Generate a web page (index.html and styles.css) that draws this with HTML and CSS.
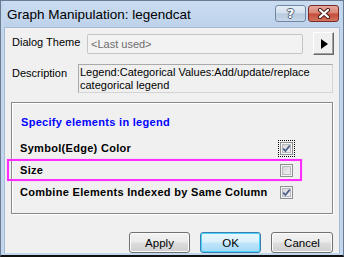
FILE: index.html
```html
<!DOCTYPE html>
<html lang="en">
<head>
  <meta charset="UTF-8" />
  <title>Graph Manipulation: legendcat</title>
  <link rel="stylesheet" href="styles.css">
</head>
<body>
  <div class="window">
    <div class="titlebar">
      <span class="title">Graph Manipulation: legendcat</span>
      <span class="cap-btn help">?</span>
      <span class="cap-btn close">
        <svg width="16" height="11" viewBox="0 0 16 11">
          <path d="M4 2 L12 9 M12 2 L4 9" stroke="#4a1d17" stroke-width="4.2" stroke-linecap="round" fill="none"/>
          <path d="M4 2 L12 9 M12 2 L4 9" stroke="#fff" stroke-width="2.2" stroke-linecap="round" fill="none"/>
        </svg>
      </span>
    </div>

    <div class="client">
      <div class="row theme-row">
        <label class="lbl theme-lbl">Dialog Theme</label>
        <div class="combo">&lt;Last used&gt;</div>
        <button class="arrow-btn"><span class="tri"></span></button>
      </div>

      <div class="row desc-row">
        <label class="lbl desc-lbl">Description</label>
        <div class="desc-box">Legend:Categorical Values:Add/update/replace<br>categorical legend</div>
      </div>

      <div class="group">
        <div class="group-head">Specify elements in legend</div>
        <div class="opt">
          <span class="opt-lbl">Symbol(Edge) Color</span>
          <span class="cb focus"><svg viewBox="0 0 11 11"><path d="M2.2 5.6 L4.4 8 L8.8 2.6" stroke="#4b5f8c" stroke-width="1.7" fill="none"/></svg></span>
        </div>
        <div class="opt marked">
          <span class="opt-lbl">Size</span>
          <span class="cb"></span>
        </div>
        <div class="opt">
          <span class="opt-lbl">Combine Elements Indexed by Same Column</span>
          <span class="cb"><svg viewBox="0 0 11 11"><path d="M2.2 5.6 L4.4 8 L8.8 2.6" stroke="#4b5f8c" stroke-width="1.7" fill="none"/></svg></span>
        </div>
      </div>

      <div class="buttons">
        <button class="btn">Apply</button>
        <button class="btn default">OK</button>
        <button class="btn wide">Cancel</button>
      </div>
    </div>
  </div>
</body>
</html>
```

FILE: styles.css
```css
html, body {
  margin: 0;
  padding: 0;
}
body {
  width: 344px;
  height: 257px;
  overflow: hidden;
  font-family: "Liberation Sans", Arial, sans-serif;
  font-size: 11px;
  color: #000;
}
.window {
  width: 344px;
  height: 257px;
  box-sizing: border-box;
  border: 1px solid #6b7c92;
  border-bottom: 2px solid #111;
  background: #c2d6ee;
  padding: 0 3px 2px 3px;
  display: flex;
  flex-direction: column;
}
.titlebar {
  height: 26px;
  display: flex;
  align-items: flex-start;
  padding: 0 1px 0 3px;
  background: linear-gradient(#cadcf0, #bdd2eb);
}
.title {
  flex: 1;
  font-size: 13.5px;
  line-height: 16px;
  padding-top: 6px;
  color: #000;
}
.cap-btn {
  margin-top: 4px;
  width: 31px;
  height: 17px;
  box-sizing: border-box;
  border-radius: 3px;
  display: flex;
  align-items: center;
  justify-content: center;
}
.help {
  margin-right: 2px;
  border: 1px solid #7287a3;
  background: linear-gradient(#e6eef7 0%, #d2deec 48%, #b7c9de 52%, #c9d8ea 100%);
  color: #fff;
  font-family: "DejaVu Sans", sans-serif;
  font-weight: bold;
  font-size: 13px;
  text-shadow: -1px 0 #4f5f78, 1px 0 #4f5f78, 0 -1px #4f5f78, 0 1px #4f5f78;
}
.close {
  border: 1px solid #7a2e26;
  background: linear-gradient(#e7a89b 0%, #d88474 48%, #c44b38 52%, #d2735e 100%);
}
.client {
  flex: 1;
  background: #f0f0f0;
  border: 1px solid #a7bbd3;
  border-bottom: none;
  padding: 0 5px 0 6px;
  display: flex;
  flex-direction: column;
}
.row {
  display: flex;
}
.lbl {
  padding-left: 1px;
  box-sizing: border-box;
}
.theme-row {
  margin-top: 4px;
  height: 23px;
  align-items: center;
}
.theme-lbl {
  width: 76px;
  margin-top: -3px;
}
.combo {
  width: 216px;
  height: 20px;
  box-sizing: border-box;
  border: 1px solid #c5c5c5;
  border-radius: 2px;
  background: #f2f2f2;
  color: #6d6d6d;
  padding: 3px 0 0 3px;
}
.arrow-btn {
  margin-left: 10px;
  width: 21px;
  height: 23px;
  padding: 0;
  box-sizing: border-box;
  background: #f0f0f0;
  border: 1px solid;
  border-color: #fff #6a6a6a #6a6a6a #fff;
  box-shadow: inset -1px -1px #a0a0a0;
  display: flex;
  align-items: center;
  justify-content: center;
}
.tri {
  width: 0;
  height: 0;
  border-top: 5px solid transparent;
  border-bottom: 5px solid transparent;
  border-left: 7px solid #000;
  margin-left: 2px;
}
.desc-row {
  margin-top: 9px;
}
.desc-lbl {
  width: 67px;
  padding-top: 3px;
}
.desc-box {
  width: 255px;
  height: 29px;
  box-sizing: border-box;
  border: 1px solid #a9a9a9;
  border-right-color: #d4d4d4;
  border-bottom-color: #d4d4d4;
  padding: 1px 0 0 1px;
  line-height: 13px;
}
.group {
  margin-top: 9px;
  width: 322px;
  height: 112px;
  box-sizing: border-box;
  border: 1px solid #8a8a8a;
  box-shadow: inset 1px 1px #fff, 1px 1px #fff;
  padding-top: 13px;
}
.group-head {
  color: #0000ff;
  font-weight: bold;
  letter-spacing: 0.3px;
  line-height: 13px;
  padding-left: 9px;
  margin-bottom: 8px;
}
.opt {
  height: 22px;
  display: flex;
  align-items: center;
  justify-content: space-between;
  padding: 0 39px 0 8px;
  font-weight: bold;
  letter-spacing: 0.3px;
}
.marked {
  position: relative;
}
.marked::after {
  content: "";
  position: absolute;
  left: -5px;
  top: 0;
  width: 295px;
  height: 22px;
  box-sizing: border-box;
  border: 2px solid #ff2cff;
  box-shadow: 0 0 1px #ff9cff;
}
.cb {
  width: 13px;
  height: 13px;
  box-sizing: border-box;
  border: 1px solid #8e8f8f;
  background: linear-gradient(135deg, #d0d0d0, #f6f6f6);
  box-shadow: inset 0 0 0 1px #f3f3f3, inset 0 0 0 2px #b8bcc2;
  display: flex;
}
.cb svg {
  width: 11px;
  height: 11px;
}
.focus {
  outline: 1px dotted #000;
  outline-offset: 1px;
}
.buttons {
  margin-top: 18px;
  display: flex;
  justify-content: flex-end;
  gap: 10px;
  padding-right: 1px;
}
.btn {
  width: 61px;
  height: 21px;
  padding: 0;
  font-family: "Liberation Sans", Arial, sans-serif;
  font-size: 11.5px;
  color: #000;
  border: 1px solid #707070;
  border-radius: 3px;
  background: linear-gradient(#f2f2f2 0%, #ebebeb 48%, #dddddd 52%, #cfcfcf 100%);
  box-shadow: inset 0 0 0 1px #fbfbfb;
}
.wide {
  width: 62px;
}
.default {
  border-color: #3c7fb1;
  background: linear-gradient(#eaf6fd 0%, #d9f0fc 48%, #bee6fd 52%, #a7d9f5 100%);
  box-shadow: inset 0 0 0 1px #48d3fb;
}
```
